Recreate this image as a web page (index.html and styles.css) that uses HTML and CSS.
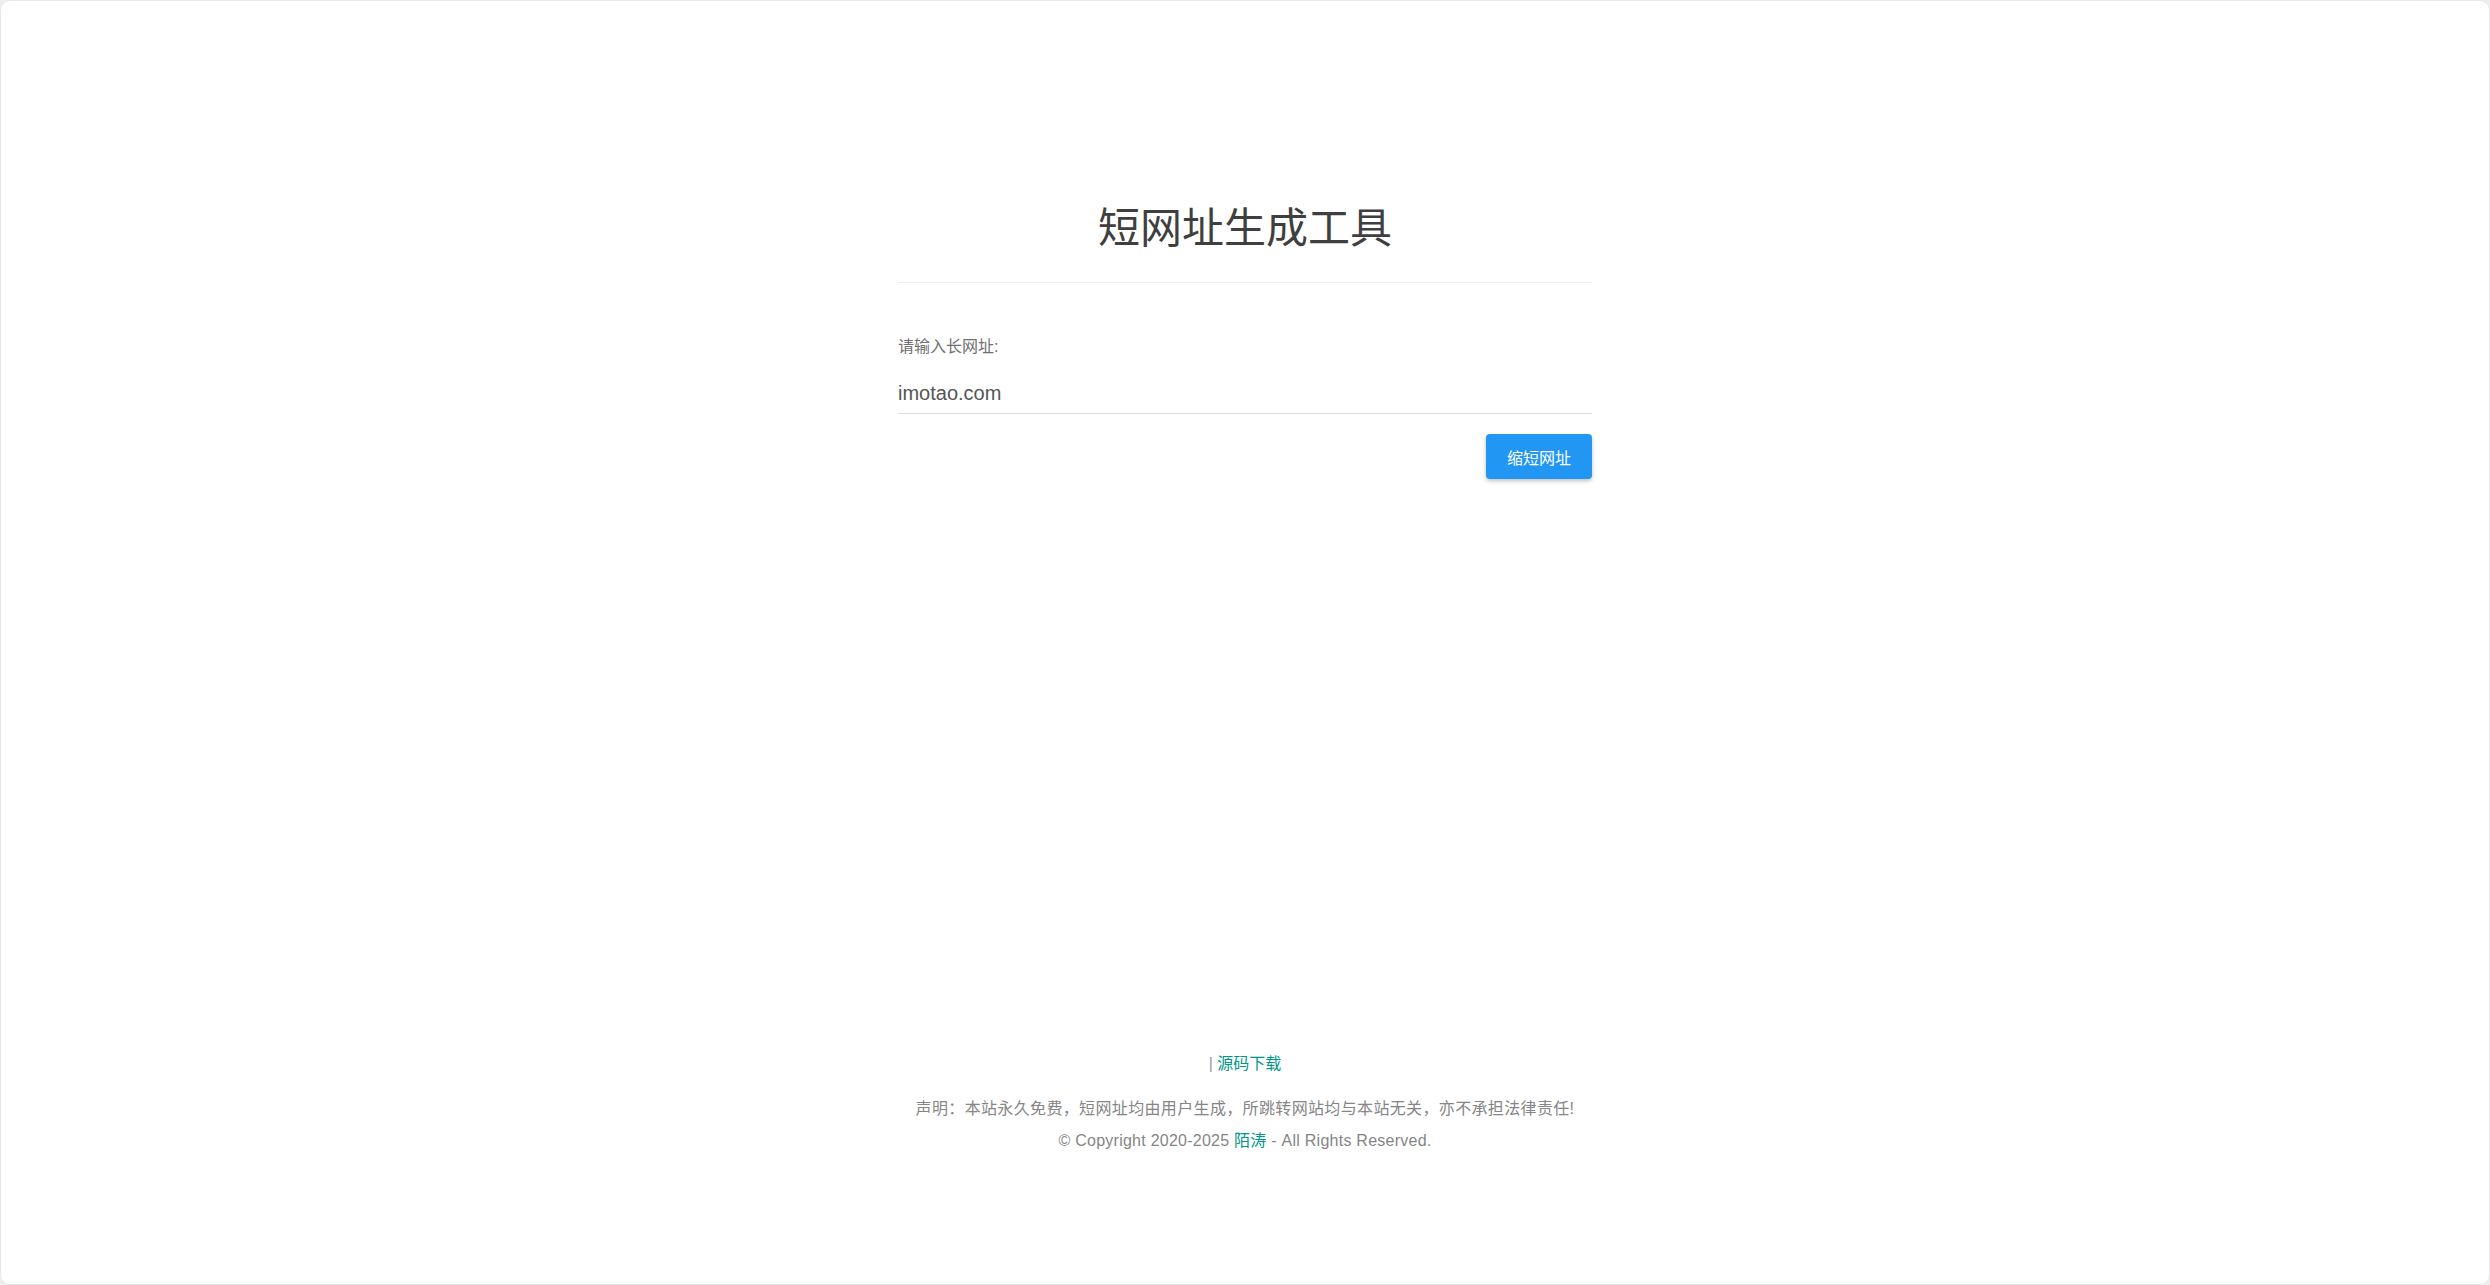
FILE: index.html
```html
<!DOCTYPE html>
<html lang="zh-CN">
<head>
<meta charset="utf-8">
<title>短网址生成工具</title>
<link rel="stylesheet" href="styles.css">
</head>
<body>
<div class="frame">
  <main class="main">
    <header class="header">
      <h1 class="title">短网址生成工具</h1>
    </header>
    <form class="form" onsubmit="return false;">
      <label class="label" for="url">请输入长网址:</label>
      <input class="input" id="url" type="text" value="imotao.com">
      <div class="actions">
        <button class="btn" type="submit">缩短网址</button>
      </div>
    </form>
  </main>
  <footer class="footer">
    <p class="links"><span class="pipe">|</span> <a class="link" href="#">源码下载</a></p>
    <p class="notice">声明：本站永久免费，短网址均由用户生成，所跳转网站均与本站无关，亦不承担法律责任!</p>
    <p class="copy">© Copyright 2020-2025 <a class="link" href="#">陌涛</a> - All Rights Reserved.</p>
  </footer>
</div>
</body>
</html>
```

FILE: styles.css
```css
html, body {
  margin: 0;
  padding: 0;
  height: 100%;
}
body {
  background: #eeeeee;
  font-family: "Liberation Sans", "Noto Sans CJK SC", sans-serif;
}
.frame {
  box-sizing: border-box;
  height: 100vh;
  background: #ffffff;
  border: 1px solid #e8e8e8;
  border-radius: 10px;
  display: flex;
  flex-direction: column;
}
.main {
  width: 694px;
  margin: 0 auto;
  padding-top: 198px;
}
.header {
  padding-bottom: 23px;
  border-bottom: 1px solid #eeeeee;
}
.title {
  margin: 0;
  font-size: 42px;
  line-height: 60px;
  font-weight: 400;
  color: #3f3f3f;
  text-align: center;
}
.form {
  margin-top: 52px;
}
.label {
  display: block;
  font-size: 16px;
  line-height: 24px;
  color: #707070;
}
.input {
  display: block;
  box-sizing: border-box;
  width: 100%;
  height: 55px;
  padding: 15px 0 0;
  margin: 0;
  border: none;
  border-bottom: 1px solid #dcdcdc;
  outline: none;
  font-family: "Liberation Sans", "Noto Sans CJK SC", sans-serif;
  font-size: 20px;
  color: #555555;
  background: transparent;
}
.actions {
  display: flex;
  justify-content: flex-end;
  margin-top: 20px;
}
.btn {
  width: 106px;
  height: 45px;
  border: none;
  border-radius: 4px;
  background: #2196f3;
  color: #ffffff;
  font-family: "Liberation Sans", "Noto Sans CJK SC", sans-serif;
  font-size: 16px;
  box-shadow: 0 2px 4px rgba(0, 0, 0, 0.25);
  cursor: pointer;
  padding: 0;
}
.footer {
  margin-top: auto;
  padding-bottom: 131px;
  text-align: center;
  font-size: 16px;
  line-height: 24px;
  color: #858585;
}
.footer p {
  margin: 0;
}
.links {
  margin-bottom: 21px !important;
}
.notice {
  margin-bottom: 8px !important;
  letter-spacing: 0.35px;
}
.copy {
  letter-spacing: 0.25px;
}
.pipe {
  color: #9a9a9a;
}
.link {
  color: #009688;
  text-decoration: none;
}
```
